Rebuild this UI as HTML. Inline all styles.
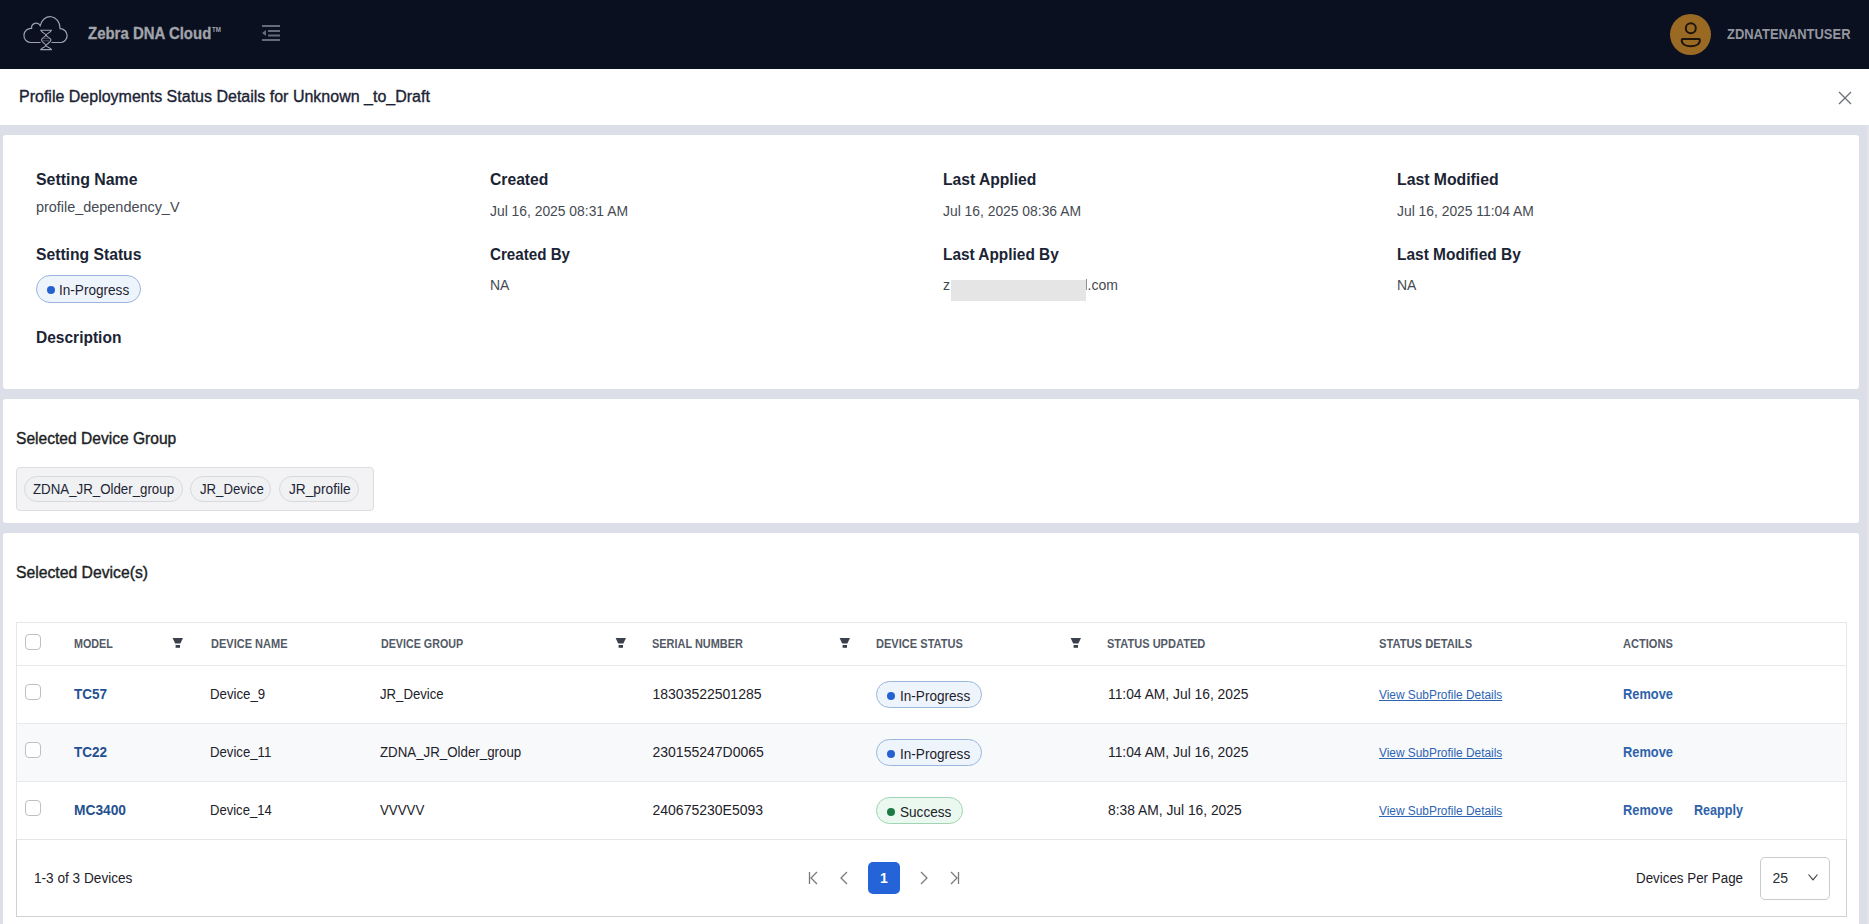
<!DOCTYPE html>
<html><head><meta charset="utf-8">
<style>
*{box-sizing:border-box;margin:0;padding:0}
html,body{width:1869px;height:924px;overflow:hidden;background:#dcdfe7;font-family:"Liberation Sans",sans-serif;position:relative}
.b{position:absolute}
.t{position:absolute;white-space:nowrap;line-height:20px;transform-origin:0 0}
</style></head><body>
<div class="b" style="left:0px;top:0px;width:1869px;height:69px;background:#0a1020"></div>
<svg class="b" style="left:0;top:0" width="80" height="60" viewBox="0 0 80 60">
<path d="M40.5 42.5 H30.5 A7.1 7.1 0 0 1 31.6 28.3 A4.6 4.6 0 0 1 40.2 25.6 A10.1 11.8 0 0 1 60.1 28.6 A7 7 0 0 1 61.3 42.5 H51.5" fill="none" stroke="#9ba3b3" stroke-width="1.2"/>
<g stroke="#a0a4ad" stroke-width="1.1" fill="none">
<path d="M40.3 30.3 H51.9 M40.3 49.6 H51.9"/>
<path d="M40.8 30.3 C42 33 46 34 46 35 C46 36.5 41.5 38 41.5 40.1 C41.5 42.5 46 44 46 45.5 C46 47 42 47.5 40.8 49.6"/>
<path d="M51.4 30.3 C50.2 33 46 34 46 35 C46 36.5 51 38 51 40.1 C51 42.5 46 44 46 45.5 C46 47 50.2 47.5 51.4 49.6"/>
</g>
<path d="M43 38.3 H49 M42.5 40.8 H49.5" stroke="#4a5060" stroke-width="1"/>
</svg>
<div class="t" style="left:88px;top:24px;font-size:16px;color:#a2a4ab;font-weight:bold;transform:scaleX(0.935);-webkit-text-stroke:0.3px #a2a4ab">Zebra DNA Cloud</div>
<div class="t" style="left:211.5px;top:26px;font-size:6.5px;color:#a2a4ab;font-weight:bold;transform:scaleX(0.95);line-height:8px">TM</div>
<svg class="b" style="left:262px;top:25px" width="19" height="17" viewBox="0 0 19 17">
<g fill="#656b7b"><rect x="0" y="0" width="18" height="2"/><rect x="6" y="5" width="12" height="2"/><rect x="6" y="9.5" width="12" height="2"/><rect x="0" y="14" width="18" height="2"/><path d="M0 8 L4 5 L4 11 Z"/></g></svg>
<div class="b" style="left:1670px;top:14px;width:41px;height:41px;border-radius:50%;background:#9a6a24"></div>
<svg class="b" style="left:1670px;top:14px" width="40" height="40" viewBox="0 0 40 40">
<circle cx="20.8" cy="14.2" r="5" fill="none" stroke="#1f150a" stroke-width="2"/>
<path d="M12.6 25 H29 Q29.9 25 29.9 25.9 C29.9 30 25.8 32.2 20.8 32.2 C15.8 32.2 11.7 30 11.7 25.9 Q11.7 25 12.6 25 Z" fill="none" stroke="#1f150a" stroke-width="2" stroke-linejoin="round"/></svg>
<div class="t" style="left:1727px;top:24px;font-size:14px;color:#93969e;font-weight:bold;transform:scaleX(0.925);">ZDNATENANTUSER</div>
<div class="b" style="left:1867px;top:69px;width:2px;height:855px;background:#e4e4e8"></div>
<div class="b" style="left:0px;top:69px;width:1869px;height:56px;background:#fff"></div>
<div class="t" style="left:19px;top:87px;font-size:16px;color:#1b2334;-webkit-text-stroke:0.35px #1b2334">Profile Deployments Status Details for Unknown _to_Draft</div>
<svg class="b" style="left:1837px;top:89.5px" width="16" height="16" viewBox="0 0 16 16"><path d="M2 2 L14 14 M14 2 L2 14" stroke="#6b6f76" stroke-width="1.3"/></svg>
<div class="b" style="left:3px;top:135px;width:1856px;height:254px;background:#fff;border-radius:3px"></div>
<div class="t" style="left:36px;top:170px;font-size:16px;color:#1b2434;font-weight:bold;transform:scaleX(0.993);">Setting Name</div>
<div class="t" style="left:490px;top:170px;font-size:16px;color:#1b2434;font-weight:bold;transform:scaleX(0.98);">Created</div>
<div class="t" style="left:943px;top:170px;font-size:16px;color:#1b2434;font-weight:bold;transform:scaleX(0.978);">Last Applied</div>
<div class="t" style="left:1397px;top:170px;font-size:16px;color:#1b2434;font-weight:bold;transform:scaleX(0.986);">Last Modified</div>
<div class="t" style="left:36px;top:245px;font-size:16px;color:#1b2434;font-weight:bold;transform:scaleX(0.98);">Setting Status</div>
<div class="t" style="left:490px;top:245px;font-size:16px;color:#1b2434;font-weight:bold;transform:scaleX(0.947);">Created By</div>
<div class="t" style="left:943px;top:245px;font-size:16px;color:#1b2434;font-weight:bold;transform:scaleX(0.962);">Last Applied By</div>
<div class="t" style="left:1397px;top:245px;font-size:16px;color:#1b2434;font-weight:bold;transform:scaleX(0.967);">Last Modified By</div>
<div class="t" style="left:36px;top:327.5px;font-size:16px;color:#1b2434;font-weight:bold;transform:scaleX(0.97);">Description</div>
<div class="t" style="left:36px;top:197px;font-size:14px;color:#454a52;transform:scaleX(1.03);">profile_dependency_V</div>
<div class="t" style="left:490px;top:201px;font-size:14px;color:#454a52;transform:scaleX(0.99);">Jul 16, 2025 08:31 AM</div>
<div class="t" style="left:943px;top:201px;font-size:14px;color:#454a52;transform:scaleX(0.99);">Jul 16, 2025 08:36 AM</div>
<div class="t" style="left:1397px;top:201px;font-size:14px;color:#454a52;transform:scaleX(0.99);">Jul 16, 2025 11:04 AM</div>
<div class="t" style="left:490px;top:275px;font-size:14px;color:#454a52;">NA</div>
<div class="t" style="left:1397px;top:275px;font-size:14px;color:#454a52;">NA</div>
<div class="t" style="left:943px;top:275px;font-size:14px;color:#454a52;">z</div>
<div class="t" style="left:1087.5px;top:275px;font-size:14px;color:#454a52;">.com</div>
<div class="b" style="left:951px;top:279.5px;width:135px;height:21px;background:#e5e5e5"></div>
<div class="b" style="left:1086px;top:279px;width:1px;height:11px;background:#8e9094"></div>
<div class="b" style="left:36px;top:275px;width:105px;height:28px;border-radius:14px;border:1px solid #9ab6dd;background:#eef4fc"></div>
<div class="b" style="left:47px;top:286px;width:8px;height:8px;border-radius:50%;background:#2562d0"></div>
<div class="t" style="left:59px;top:280px;font-size:14px;color:#1d2330;transform:scaleX(0.97);">In-Progress</div>
<div class="b" style="left:3px;top:399px;width:1856px;height:124px;background:#fff;border-radius:3px"></div>
<div class="t" style="left:16px;top:429px;font-size:16px;color:#1c1f26;transform:scaleX(0.974);-webkit-text-stroke:0.4px #1c1f26">Selected Device Group</div>
<div class="b" style="left:16px;top:467px;width:358px;height:44px;background:#f3f3f5;border:1px solid #dcdde0;border-radius:4px"></div>
<div class="b" style="left:24px;top:476px;width:159px;height:26px;background:#f0f1f3;border:1px solid #d8d9dd;border-radius:13px"></div>
<div class="t" style="left:33px;top:479px;font-size:14px;color:#1d2433;transform:scaleX(0.949);">ZDNA_JR_Older_group</div>
<div class="b" style="left:190px;top:476px;width:81px;height:26px;background:#f0f1f3;border:1px solid #d8d9dd;border-radius:13px"></div>
<div class="t" style="left:199.5px;top:479px;font-size:14px;color:#1d2433;transform:scaleX(0.942);">JR_Device</div>
<div class="b" style="left:279px;top:476px;width:80px;height:26px;background:#f0f1f3;border:1px solid #d8d9dd;border-radius:13px"></div>
<div class="t" style="left:288.5px;top:479px;font-size:14px;color:#1d2433;transform:scaleX(0.978);">JR_profile</div>
<div class="b" style="left:3px;top:533px;width:1856px;height:400px;background:#fff;border-radius:3px"></div>
<div class="t" style="left:16px;top:563px;font-size:16px;color:#1c1f26;transform:scaleX(0.983);-webkit-text-stroke:0.4px #1c1f26">Selected Device(s)</div>
<div class="b" style="left:16px;top:622px;width:1831px;height:219px;border:1px solid #e6e7eb;border-bottom:none;background:#fff"></div>
<div class="b" style="left:25px;top:634px;width:16px;height:16px;border:1px solid #bfc0c3;border-radius:4px;background:#fff"></div>
<div class="t" style="left:74px;top:634px;font-size:12px;color:#535a66;font-weight:bold;transform:scaleX(0.896);">MODEL</div>
<div class="t" style="left:210.5px;top:634px;font-size:12px;color:#535a66;font-weight:bold;transform:scaleX(0.918);">DEVICE NAME</div>
<div class="t" style="left:380.5px;top:634px;font-size:12px;color:#535a66;font-weight:bold;transform:scaleX(0.892);">DEVICE GROUP</div>
<div class="t" style="left:652px;top:634px;font-size:12px;color:#535a66;font-weight:bold;transform:scaleX(0.911);">SERIAL NUMBER</div>
<div class="t" style="left:876px;top:634px;font-size:12px;color:#535a66;font-weight:bold;transform:scaleX(0.922);">DEVICE STATUS</div>
<div class="t" style="left:1107px;top:634px;font-size:12px;color:#535a66;font-weight:bold;transform:scaleX(0.921);">STATUS UPDATED</div>
<div class="t" style="left:1379px;top:634px;font-size:12px;color:#535a66;font-weight:bold;transform:scaleX(0.931);">STATUS DETAILS</div>
<div class="t" style="left:1622.5px;top:634px;font-size:12px;color:#535a66;font-weight:bold;transform:scaleX(0.922);">ACTIONS</div>
<svg class="b" style="left:172px;top:638px" width="12" height="10" viewBox="0 0 12 10"><path d="M0.6 0 H11 L8.4 5.6 H3.2 Z" fill="#3b414c"/><rect x="3.6" y="7" width="4.4" height="2.8" fill="#3b414c"/></svg>
<svg class="b" style="left:615px;top:638px" width="12" height="10" viewBox="0 0 12 10"><path d="M0.6 0 H11 L8.4 5.6 H3.2 Z" fill="#3b414c"/><rect x="3.6" y="7" width="4.4" height="2.8" fill="#3b414c"/></svg>
<svg class="b" style="left:839px;top:638px" width="12" height="10" viewBox="0 0 12 10"><path d="M0.6 0 H11 L8.4 5.6 H3.2 Z" fill="#3b414c"/><rect x="3.6" y="7" width="4.4" height="2.8" fill="#3b414c"/></svg>
<svg class="b" style="left:1070px;top:638px" width="12" height="10" viewBox="0 0 12 10"><path d="M0.6 0 H11 L8.4 5.6 H3.2 Z" fill="#3b414c"/><rect x="3.6" y="7" width="4.4" height="2.8" fill="#3b414c"/></svg>
<div class="b" style="left:17px;top:665px;width:1829px;height:58px;background:#fff;border-top:1px solid #e8e9ed"></div>
<div class="b" style="left:25px;top:684px;width:16px;height:16px;border:1px solid #bfc0c3;border-radius:4px;background:#fff"></div>
<div class="t" style="left:74px;top:684px;font-size:14px;color:#24508f;font-weight:bold;transform:scaleX(0.965);">TC57</div>
<div class="t" style="left:209.5px;top:684px;font-size:14px;color:#1d2129;transform:scaleX(0.945);">Device_9</div>
<div class="t" style="left:379.5px;top:684px;font-size:14px;color:#1d2129;transform:scaleX(0.94);">JR_Device</div>
<div class="t" style="left:652.5px;top:684px;font-size:14px;color:#1d2129;">18303522501285</div>
<div class="b" style="left:876px;top:681px;width:106px;height:27px;border-radius:14px;border:1px solid #9ab6dd;background:#eef4fc"></div>
<div class="b" style="left:887px;top:692px;width:8px;height:8px;border-radius:50%;background:#2562d0"></div>
<div class="t" style="left:900px;top:686px;font-size:14px;color:#1d2129;transform:scaleX(0.97);">In-Progress</div>
<div class="t" style="left:1107.5px;top:684px;font-size:14px;color:#1d2129;transform:scaleX(0.987);">11:04 AM, Jul 16, 2025</div>
<div class="t" style="left:1379px;top:685px;font-size:12px;color:#2d64b3;transform:scaleX(0.99);text-decoration:underline">View SubProfile Details</div>
<div class="t" style="left:1623px;top:684px;font-size:14px;color:#2e62ab;font-weight:bold;transform:scaleX(0.917);">Remove</div>
<div class="b" style="left:17px;top:723px;width:1829px;height:58px;background:#f8f9fb;border-top:1px solid #e8e9ed"></div>
<div class="b" style="left:25px;top:742px;width:16px;height:16px;border:1px solid #bfc0c3;border-radius:4px;background:#fff"></div>
<div class="t" style="left:74px;top:742px;font-size:14px;color:#24508f;font-weight:bold;transform:scaleX(0.965);">TC22</div>
<div class="t" style="left:209.5px;top:742px;font-size:14px;color:#1d2129;transform:scaleX(0.94);">Device_11</div>
<div class="t" style="left:379.5px;top:742px;font-size:14px;color:#1d2129;transform:scaleX(0.95);">ZDNA_JR_Older_group</div>
<div class="t" style="left:652.5px;top:742px;font-size:14px;color:#1d2129;">230155247D0065</div>
<div class="b" style="left:876px;top:739px;width:106px;height:27px;border-radius:14px;border:1px solid #9ab6dd;background:#eef4fc"></div>
<div class="b" style="left:887px;top:750px;width:8px;height:8px;border-radius:50%;background:#2562d0"></div>
<div class="t" style="left:900px;top:744px;font-size:14px;color:#1d2129;transform:scaleX(0.97);">In-Progress</div>
<div class="t" style="left:1107.5px;top:742px;font-size:14px;color:#1d2129;transform:scaleX(0.987);">11:04 AM, Jul 16, 2025</div>
<div class="t" style="left:1379px;top:743px;font-size:12px;color:#2d64b3;transform:scaleX(0.99);text-decoration:underline">View SubProfile Details</div>
<div class="t" style="left:1623px;top:742px;font-size:14px;color:#2e62ab;font-weight:bold;transform:scaleX(0.917);">Remove</div>
<div class="b" style="left:17px;top:781px;width:1829px;height:58px;background:#fff;border-top:1px solid #e8e9ed"></div>
<div class="b" style="left:25px;top:800px;width:16px;height:16px;border:1px solid #bfc0c3;border-radius:4px;background:#fff"></div>
<div class="t" style="left:74px;top:800px;font-size:14px;color:#24508f;font-weight:bold;transform:scaleX(0.983);">MC3400</div>
<div class="t" style="left:209.5px;top:800px;font-size:14px;color:#1d2129;transform:scaleX(0.932);">Device_14</div>
<div class="t" style="left:379.5px;top:800px;font-size:14px;color:#1d2129;transform:scaleX(0.95);">VVVVV</div>
<div class="t" style="left:652.5px;top:800px;font-size:14px;color:#1d2129;">240675230E5093</div>
<div class="b" style="left:876px;top:797px;width:87px;height:27px;border-radius:14px;border:1px solid #9fd5b2;background:#eaf8ef"></div>
<div class="b" style="left:887px;top:808px;width:8px;height:8px;border-radius:50%;background:#1e7a45"></div>
<div class="t" style="left:900px;top:802px;font-size:14px;color:#1d2129;transform:scaleX(0.97);">Success</div>
<div class="t" style="left:1107.5px;top:800px;font-size:14px;color:#1d2129;transform:scaleX(0.987);">8:38 AM, Jul 16, 2025</div>
<div class="t" style="left:1379px;top:801px;font-size:12px;color:#2d64b3;transform:scaleX(0.99);text-decoration:underline">View SubProfile Details</div>
<div class="t" style="left:1623px;top:800px;font-size:14px;color:#2e62ab;font-weight:bold;transform:scaleX(0.917);">Remove</div>
<div class="t" style="left:1693.5px;top:800px;font-size:14px;color:#2e62ab;font-weight:bold;transform:scaleX(0.9);">Reapply</div>
<div class="b" style="left:16px;top:839px;width:1831px;height:78px;border:1px solid #d0d1d4;border-top-color:#e4e5e8;background:#fff"></div>
<div class="t" style="left:33.5px;top:868px;font-size:14px;color:#1d2129;transform:scaleX(0.973);">1-3 of 3 Devices</div>
<svg class="b" style="left:805px;top:868px" width="160" height="20" viewBox="0 0 160 20" fill="none" stroke="#7a7a7a" stroke-width="1.3">
<path d="M4.5 4 V16 M12 4 L6 10 L12 16"/><path d="M42 4 L36 10 L42 16"/><path d="M116 4 L122 10 L116 16"/><path d="M146 4 L152 10 L146 16 M153.5 4 V16"/></svg>
<div class="b" style="left:868px;top:862px;width:32px;height:32px;border-radius:5px;background:#2563d8"></div>
<div class="t" style="left:868px;top:868px;font-size:14px;color:#fff;font-weight:bold;width:32px;text-align:center">1</div>
<div class="t" style="left:1635.5px;top:868px;font-size:14px;color:#1d2129;transform:scaleX(0.955);">Devices Per Page</div>
<div class="b" style="left:1760px;top:857px;width:70px;height:43px;border:1px solid #c9cacd;border-radius:5px;background:#fff"></div>
<div class="t" style="left:1772.5px;top:868px;font-size:14px;color:#2a2d33;">25</div>
<svg class="b" style="left:1806px;top:872px" width="14" height="10" viewBox="0 0 14 10"><path d="M2.5 2.5 L7 7.8 L11.5 2.5" fill="none" stroke="#3a3a3a" stroke-width="1.1"/></svg>
</body></html>
